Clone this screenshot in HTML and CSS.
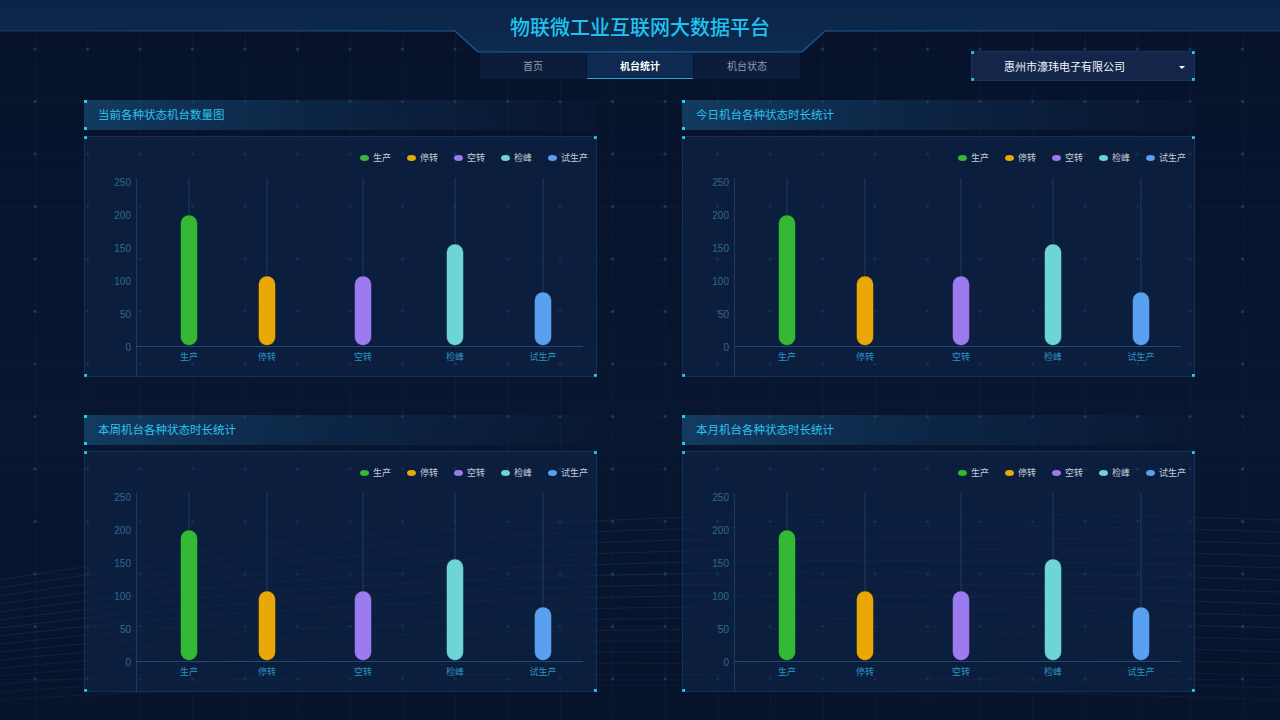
FILE: index.html
```html
<!DOCTYPE html>
<html lang="zh">
<head>
<meta charset="utf-8">
<title>物联微工业互联网大数据平台</title>
<link rel="stylesheet" href="styles.css">
</head>
<body>
<div class="page">
  <svg class="waves" width="1280" height="260" viewBox="0 0 1280 260" preserveAspectRatio="none">
    <g fill="none" stroke="#2a86c0" stroke-width="1">
      <path d="M0,120 C300,70 700,40 1280,60" opacity="0.14"/>
      <path d="M0,128 C300,80 700,52 1280,72" opacity="0.14"/>
      <path d="M0,136 C300,90 700,64 1280,84" opacity="0.15"/>
      <path d="M0,144 C300,100 700,76 1280,96" opacity="0.15"/>
      <path d="M0,152 C300,110 700,88 1280,108" opacity="0.16"/>
      <path d="M0,160 C300,120 700,100 1280,120" opacity="0.16"/>
      <path d="M0,168 C300,130 700,112 1280,132" opacity="0.16"/>
      <path d="M0,176 C300,140 700,124 1280,144" opacity="0.16"/>
      <path d="M0,184 C300,150 700,136 1280,156" opacity="0.15"/>
      <path d="M0,192 C300,160 700,148 1280,168" opacity="0.15"/>
      <path d="M0,200 C300,170 700,160 1280,180" opacity="0.14"/>
      <path d="M0,208 C300,180 700,172 1280,192" opacity="0.13"/>
      <path d="M0,216 C300,190 700,184 1280,204" opacity="0.12"/>
      <path d="M0,224 C300,200 700,196 1280,216" opacity="0.11"/>
      <path d="M0,232 C300,210 700,208 1280,228" opacity="0.10"/>
      <path d="M0,240 C300,220 700,220 1280,240" opacity="0.09"/>
    </g>
  </svg>

  <header class="header">
    <svg class="header-bg" width="1280" height="56" viewBox="0 0 1280 56">
      <defs>
        <linearGradient id="band" x1="0" y1="0" x2="0" y2="1">
          <stop offset="0" stop-color="#0b2446"/>
          <stop offset="1" stop-color="#0d2a50"/>
        </linearGradient>
        <linearGradient id="edge" x1="0" y1="0" x2="1" y2="0">
          <stop offset="0" stop-color="#1a4f82" stop-opacity="0.6"/>
          <stop offset="0.35" stop-color="#1b5c92"/>
          <stop offset="0.5" stop-color="#1f7ab0"/>
          <stop offset="0.65" stop-color="#1b5c92"/>
          <stop offset="1" stop-color="#1a4f82" stop-opacity="0.6"/>
        </linearGradient>
      </defs>
      <path d="M0,0 H1280 V31 H825 L802,52 H478 L455,31 H0 Z" fill="url(#band)"/>
      <path d="M0,31 H455 L478,52 H802 L825,31 H1280" fill="none" stroke="url(#edge)" stroke-width="1.2"/>
    </svg>
    <h1 class="title">物联微工业互联网大数据平台</h1>
  </header>

  <nav class="navbar">
    <div class="nav-side"></div>
    <div class="tabs">
      <div class="tab">首页</div>
      <div class="tab active">机台统计</div>
      <div class="tab">机台状态</div>
    </div>
    <div class="nav-side nav-right">
      <div class="select">
        <span class="select-text">惠州市濠玮电子有限公司</span>
        <span class="caret"></span>
      </div>
    </div>
  </nav>

  <main class="panels">
    <section class="panel">
      <div class="panel-title">当前各种状态机台数量图</div>
      <div class="chart-box">
        <div class="legend">
          <span class="legend-item"><i class="dot c1"></i>生产</span>
          <span class="legend-item"><i class="dot c2"></i>停转</span>
          <span class="legend-item"><i class="dot c3"></i>空转</span>
          <span class="legend-item"><i class="dot c4"></i>检峰</span>
          <span class="legend-item"><i class="dot c5"></i>试生产</span>
        </div>
        <svg class="chart" width="513" height="205" viewBox="0 36 513 205">
          <g class="ylabels">
            <text x="47" y="49.5">250</text><text x="47" y="82.5">200</text><text x="47" y="115.5">150</text>
            <text x="47" y="148.5">100</text><text x="47" y="181.5">50</text><text x="47" y="214.5">0</text>
          </g>
          <line class="axis" x1="52.5" y1="42" x2="52.5" y2="241"/>
          <line class="zero" x1="52" y1="210.5" x2="499" y2="210.5"/>
          <g class="guides">
            <line x1="105" y1="42" x2="105" y2="80"/><line x1="183" y1="42" x2="183" y2="141"/>
            <line x1="279" y1="42" x2="279" y2="141"/><line x1="371" y1="42" x2="371" y2="109"/>
            <line x1="459" y1="42" x2="459" y2="157"/>
          </g>
          <rect class="bar b1" x="96.5" y="79" width="17" height="130.5" rx="8.5"/>
          <rect class="bar b2" x="174.5" y="140" width="17" height="69.5" rx="8.5"/>
          <rect class="bar b3" x="270.5" y="140" width="17" height="69.5" rx="8.5"/>
          <rect class="bar b4" x="362.5" y="108" width="17" height="101.5" rx="8.5"/>
          <rect class="bar b5" x="450.5" y="156" width="17" height="53.5" rx="8.5"/>
          <g class="xlabels">
            <text x="105" y="224">生产</text><text x="183" y="224">停转</text><text x="279" y="224">空转</text>
            <text x="371" y="224">检峰</text><text x="459" y="224">试生产</text>
          </g>
        </svg>
      </div>
    </section>

    <section class="panel">
      <div class="panel-title">今日机台各种状态时长统计</div>
      <div class="chart-box">
        <div class="legend">
          <span class="legend-item"><i class="dot c1"></i>生产</span>
          <span class="legend-item"><i class="dot c2"></i>停转</span>
          <span class="legend-item"><i class="dot c3"></i>空转</span>
          <span class="legend-item"><i class="dot c4"></i>检峰</span>
          <span class="legend-item"><i class="dot c5"></i>试生产</span>
        </div>
        <svg class="chart" width="513" height="205" viewBox="0 36 513 205">
          <g class="ylabels">
            <text x="47" y="49.5">250</text><text x="47" y="82.5">200</text><text x="47" y="115.5">150</text>
            <text x="47" y="148.5">100</text><text x="47" y="181.5">50</text><text x="47" y="214.5">0</text>
          </g>
          <line class="axis" x1="52.5" y1="42" x2="52.5" y2="241"/>
          <line class="zero" x1="52" y1="210.5" x2="499" y2="210.5"/>
          <g class="guides">
            <line x1="105" y1="42" x2="105" y2="80"/><line x1="183" y1="42" x2="183" y2="141"/>
            <line x1="279" y1="42" x2="279" y2="141"/><line x1="371" y1="42" x2="371" y2="109"/>
            <line x1="459" y1="42" x2="459" y2="157"/>
          </g>
          <rect class="bar b1" x="96.5" y="79" width="17" height="130.5" rx="8.5"/>
          <rect class="bar b2" x="174.5" y="140" width="17" height="69.5" rx="8.5"/>
          <rect class="bar b3" x="270.5" y="140" width="17" height="69.5" rx="8.5"/>
          <rect class="bar b4" x="362.5" y="108" width="17" height="101.5" rx="8.5"/>
          <rect class="bar b5" x="450.5" y="156" width="17" height="53.5" rx="8.5"/>
          <g class="xlabels">
            <text x="105" y="224">生产</text><text x="183" y="224">停转</text><text x="279" y="224">空转</text>
            <text x="371" y="224">检峰</text><text x="459" y="224">试生产</text>
          </g>
        </svg>
      </div>
    </section>

    <section class="panel">
      <div class="panel-title">本周机台各种状态时长统计</div>
      <div class="chart-box">
        <div class="legend">
          <span class="legend-item"><i class="dot c1"></i>生产</span>
          <span class="legend-item"><i class="dot c2"></i>停转</span>
          <span class="legend-item"><i class="dot c3"></i>空转</span>
          <span class="legend-item"><i class="dot c4"></i>检峰</span>
          <span class="legend-item"><i class="dot c5"></i>试生产</span>
        </div>
        <svg class="chart" width="513" height="205" viewBox="0 36 513 205">
          <g class="ylabels">
            <text x="47" y="49.5">250</text><text x="47" y="82.5">200</text><text x="47" y="115.5">150</text>
            <text x="47" y="148.5">100</text><text x="47" y="181.5">50</text><text x="47" y="214.5">0</text>
          </g>
          <line class="axis" x1="52.5" y1="42" x2="52.5" y2="241"/>
          <line class="zero" x1="52" y1="210.5" x2="499" y2="210.5"/>
          <g class="guides">
            <line x1="105" y1="42" x2="105" y2="80"/><line x1="183" y1="42" x2="183" y2="141"/>
            <line x1="279" y1="42" x2="279" y2="141"/><line x1="371" y1="42" x2="371" y2="109"/>
            <line x1="459" y1="42" x2="459" y2="157"/>
          </g>
          <rect class="bar b1" x="96.5" y="79" width="17" height="130.5" rx="8.5"/>
          <rect class="bar b2" x="174.5" y="140" width="17" height="69.5" rx="8.5"/>
          <rect class="bar b3" x="270.5" y="140" width="17" height="69.5" rx="8.5"/>
          <rect class="bar b4" x="362.5" y="108" width="17" height="101.5" rx="8.5"/>
          <rect class="bar b5" x="450.5" y="156" width="17" height="53.5" rx="8.5"/>
          <g class="xlabels">
            <text x="105" y="224">生产</text><text x="183" y="224">停转</text><text x="279" y="224">空转</text>
            <text x="371" y="224">检峰</text><text x="459" y="224">试生产</text>
          </g>
        </svg>
      </div>
    </section>

    <section class="panel">
      <div class="panel-title">本月机台各种状态时长统计</div>
      <div class="chart-box">
        <div class="legend">
          <span class="legend-item"><i class="dot c1"></i>生产</span>
          <span class="legend-item"><i class="dot c2"></i>停转</span>
          <span class="legend-item"><i class="dot c3"></i>空转</span>
          <span class="legend-item"><i class="dot c4"></i>检峰</span>
          <span class="legend-item"><i class="dot c5"></i>试生产</span>
        </div>
        <svg class="chart" width="513" height="205" viewBox="0 36 513 205">
          <g class="ylabels">
            <text x="47" y="49.5">250</text><text x="47" y="82.5">200</text><text x="47" y="115.5">150</text>
            <text x="47" y="148.5">100</text><text x="47" y="181.5">50</text><text x="47" y="214.5">0</text>
          </g>
          <line class="axis" x1="52.5" y1="42" x2="52.5" y2="241"/>
          <line class="zero" x1="52" y1="210.5" x2="499" y2="210.5"/>
          <g class="guides">
            <line x1="105" y1="42" x2="105" y2="80"/><line x1="183" y1="42" x2="183" y2="141"/>
            <line x1="279" y1="42" x2="279" y2="141"/><line x1="371" y1="42" x2="371" y2="109"/>
            <line x1="459" y1="42" x2="459" y2="157"/>
          </g>
          <rect class="bar b1" x="96.5" y="79" width="17" height="130.5" rx="8.5"/>
          <rect class="bar b2" x="174.5" y="140" width="17" height="69.5" rx="8.5"/>
          <rect class="bar b3" x="270.5" y="140" width="17" height="69.5" rx="8.5"/>
          <rect class="bar b4" x="362.5" y="108" width="17" height="101.5" rx="8.5"/>
          <rect class="bar b5" x="450.5" y="156" width="17" height="53.5" rx="8.5"/>
          <g class="xlabels">
            <text x="105" y="224">生产</text><text x="183" y="224">停转</text><text x="279" y="224">空转</text>
            <text x="371" y="224">检峰</text><text x="459" y="224">试生产</text>
          </g>
        </svg>
      </div>
    </section>
  </main>
</div>
</body>
</html>
```

FILE: styles.css
```css
* { box-sizing: border-box; }

html, body {
  margin: 0;
  padding: 0;
  background: #07122a;
}

body {
  font-family: "Noto Sans CJK SC", "Noto Sans", sans-serif;
}

.page {
  position: relative;
  width: 1280px;
  height: 720px;
  overflow: hidden;
  background-color: #07122a;
  background-image:
    radial-gradient(circle, rgba(40, 110, 150, 0.45) 0 1.1px, transparent 1.7px),
    linear-gradient(90deg, rgba(24, 48, 84, 0.22) 1px, transparent 1px),
    linear-gradient(rgba(24, 48, 84, 0.18) 1px, transparent 1px),
    linear-gradient(180deg, #07122a 0%, #081630 60%, #07132b 100%);
  background-size: 52.5px 52.5px, 52.5px 100%, 100% 52.5px, 100% 100%;
  background-position: 8.75px 22.75px, 35px 0, 0 49px, 0 0;
}

.waves {
  position: absolute;
  left: 0;
  top: 460px;
  z-index: 0;
}

/* Header */
.header {
  position: relative;
  z-index: 1;
  height: 51px;
  padding-top: 15px;
}

.header-bg {
  position: absolute;
  left: 0;
  top: 0;
  z-index: -1;
}

.title {
  margin: 0;
  text-align: center;
  font-size: 20px;
  line-height: 24px;
  font-weight: 500;
  color: #20c3ef;
  letter-spacing: 0;
}

/* Nav */
.navbar {
  position: relative;
  z-index: 1;
  height: 30px;
  display: grid;
  grid-template-columns: 1fr auto 1fr;
  align-items: center;
}

.tabs {
  display: flex;
  gap: 1px;
  height: 26px;
}

.tab {
  width: 106px;
  height: 26px;
  line-height: 26px;
  text-align: center;
  font-size: 10px;
  color: #8e9bb0;
  background: #0b1d3b;
}

.tab.active {
  color: #ffffff;
  font-weight: 700;
  background: #0f2a50;
  box-shadow: inset 0 -1px 0 #2d9fd0;
}

.nav-right {
  display: flex;
  justify-content: flex-end;
  padding-right: 85px;
}

.select {
  position: relative;
  width: 224px;
  height: 30px;
  display: flex;
  align-items: center;
  justify-content: space-between;
  padding: 0 10px 0 33px;
  background:
    linear-gradient(#19d2f2, #19d2f2) left top / 3px 3px no-repeat,
    linear-gradient(#19d2f2, #19d2f2) right top / 3px 3px no-repeat,
    linear-gradient(#19d2f2, #19d2f2) left bottom / 3px 3px no-repeat,
    linear-gradient(#19d2f2, #19d2f2) right bottom / 3px 3px no-repeat,
    #13264a;
  box-shadow: inset 0 0 0 1px rgba(40, 80, 130, 0.35);
}

.select-text {
  font-size: 11px;
  color: #f2f5fa;
  line-height: 14px;
}

.caret {
  width: 0;
  height: 0;
  border-left: 3px solid transparent;
  border-right: 3px solid transparent;
  border-top: 3px solid #ffffff;
  margin-top: 2px;
}

/* Panels */
.panels {
  position: relative;
  z-index: 1;
  display: grid;
  grid-template-columns: 513px 513px;
  justify-content: space-between;
  row-gap: 38px;
  padding: 0 85px 0 84px;
  margin-top: 19px;
}

.panel {
  display: flex;
  flex-direction: column;
  gap: 6px;
}

.panel-title {
  height: 30px;
  line-height: 29px;
  padding-left: 14px;
  font-size: 11.5px;
  color: #2cc2ef;
  background:
    linear-gradient(#19d2f2, #19d2f2) left top / 3px 3px no-repeat,
    linear-gradient(#19d2f2, #19d2f2) left bottom / 3px 3px no-repeat,
    linear-gradient(90deg, rgba(22, 72, 112, 0.75) 0%, rgba(18, 58, 98, 0.45) 45%, rgba(14, 40, 72, 0.10) 100%);
}

.chart-box {
  height: 241px;
  display: flex;
  flex-direction: column;
  background:
    linear-gradient(#19d2f2, #19d2f2) left top / 3px 3px no-repeat,
    linear-gradient(#19d2f2, #19d2f2) right top / 3px 3px no-repeat,
    linear-gradient(#19d2f2, #19d2f2) left bottom / 3px 3px no-repeat,
    linear-gradient(#19d2f2, #19d2f2) right bottom / 3px 3px no-repeat,
    rgba(14, 38, 74, 0.55);
  box-shadow: inset 0 0 0 1px rgba(36, 82, 130, 0.35);
}

.legend {
  height: 36px;
  padding: 16px 9px 0 0;
  display: flex;
  justify-content: flex-end;
  gap: 16px;
  font-size: 9px;
  line-height: 12px;
  color: #c6ccd6;
}

.legend-item {
  display: flex;
  align-items: center;
  gap: 4px;
  white-space: nowrap;
  height: 12px;
}

.dot {
  display: block;
  width: 9px;
  height: 6px;
  border-radius: 50%;
}

.c1 { background: #35b935; }
.c2 { background: #eaa806; }
.c3 { background: #9b7bef; }
.c4 { background: #6dd5d5; }
.c5 { background: #5aa0f0; }

.chart {
  display: block;
}

.ylabels text {
  font-family: "Liberation Sans", Arial, sans-serif;
  font-size: 10px;
  fill: #2e6a92;
  text-anchor: end;
}

.xlabels text {
  font-family: "Noto Sans CJK SC", sans-serif;
  font-size: 9px;
  fill: #2b93c2;
  text-anchor: middle;
}

.axis {
  stroke: #1b3c5e;
  stroke-width: 1;
}

.zero {
  stroke: #1d4a6e;
  stroke-width: 1;
}

.guides line {
  stroke: #213d5c;
  stroke-width: 1;
}

.bar { stroke: rgba(5, 15, 35, 0.5); stroke-width: 0.8; }
.b1 { fill: #35b935; }
.b2 { fill: #eaa806; }
.b3 { fill: #9b7bef; }
.b4 { fill: #6dd5d5; }
.b5 { fill: #5aa0f0; }
```
